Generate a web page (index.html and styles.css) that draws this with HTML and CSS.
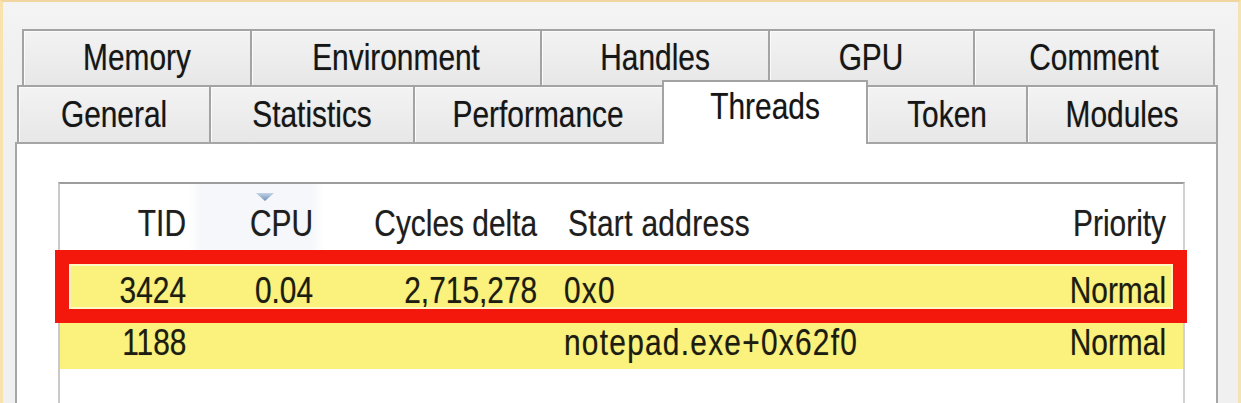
FILE: index.html
```html
<!DOCTYPE html>
<html>
<head>
<meta charset="utf-8">
<title>Threads</title>
<link rel="stylesheet" href="styles.css">
</head>
<body>
<div class="window">
  <div class="tabs">
    <div class="tab-row row-top">
      <div class="tab" style="width:230px"><span class="t">Memory</span></div>
      <div class="tab" style="width:292px"><span class="t">Environment</span></div>
      <div class="tab" style="width:230px"><span class="t">Handles</span></div>
      <div class="tab" style="width:207px"><span class="t">GPU</span></div>
      <div class="tab" style="width:242px"><span class="t">Comment</span></div>
    </div>
    <div class="tab-row row-bottom">
      <div class="tab" style="width:194px"><span class="t">General</span></div>
      <div class="tab" style="width:206px"><span class="t">Statistics</span></div>
      <div class="tab" style="width:251px"><span class="t">Performance</span></div>
      <div class="tab selected" style="width:206px"><span class="t">Threads</span></div>
      <div class="tab" style="width:162px"><span class="t">Token</span></div>
      <div class="tab" style="width:192px"><span class="t">Modules</span></div>
    </div>
  </div>
  <div class="panel">
    <div class="list">
      <div class="lv-row header">
        <div class="cell num c-tid"><span class="t">TID</span></div>
        <div class="cell num c-cpu sorted"><span class="sort-arrow"><svg width="20" height="8" viewBox="0 0 20 8"><defs><linearGradient id="ag" x1="0" y1="0" x2="0" y2="1"><stop offset="0" stop-color="#c3d3e6"/><stop offset="1" stop-color="#6f8fb8"/></linearGradient></defs><polygon points="1,0 19,0 10,8" fill="url(#ag)"/></svg></span><span class="t">CPU</span></div>
        <div class="cell num c-cyc"><span class="t">Cycles delta</span></div>
        <div class="cell c-start"><span class="t">Start address</span></div>
        <div class="cell num c-prio"><span class="t">Priority</span></div>
      </div>
      <div class="lv-row item own">
        <div class="cell num c-tid"><span class="t">3424</span></div>
        <div class="cell num c-cpu"><span class="t">0.04</span></div>
        <div class="cell num c-cyc"><span class="t">2,715,278</span></div>
        <div class="cell c-start"><span class="t">0x0</span></div>
        <div class="cell num c-prio"><span class="t">Normal</span></div>
      </div>
      <div class="lv-row item own">
        <div class="cell num c-tid"><span class="t">1188</span></div>
        <div class="cell num c-cpu"></div>
        <div class="cell num c-cyc"></div>
        <div class="cell c-start"><span class="t">notepad.exe+0x62f0</span></div>
        <div class="cell num c-prio"><span class="t">Normal</span></div>
      </div>
      <div class="highlight-box"></div>
    </div>
  </div>
</div>
</body>
</html>
```

FILE: styles.css
```css
html, body {
  margin: 0;
  padding: 0;
  background: #f0f0f0;
  overflow: hidden;
}

.window {
  box-sizing: border-box;
  width: 1241px;
  height: 403px;
  overflow: hidden;
  border-top: 2px solid #f1d79f;
  border-left: 3px solid #f9e2ab;
  border-right: 3px solid #f6e3b4;
  background: linear-gradient(#f4f4f4, #f0f0f0 60px);
  padding-top: 27px;
  font-family: "Liberation Sans", Arial, sans-serif;
  font-size: 36px;
  line-height: 40px;
  color: #161616;
}

.t {
  display: inline-block;
  transform: scaleX(0.83);
  text-shadow: 0 0 1px rgba(0, 0, 0, 0.35);
}

.tab .t {
  transform-origin: center;
}

.num .t {
  transform-origin: right center;
}

.c-start .t {
  transform-origin: left center;
}

.tabs {
  display: flex;
  flex-direction: column;
}

.tab-row {
  display: flex;
}

.row-top {
  margin-left: 19px;
  height: 56px;
}

.row-bottom {
  margin-left: 14px;
  margin-top: -5px;
  align-items: flex-end;
  height: 62px;
}

.tab {
  box-sizing: border-box;
  height: 57px;
  display: flex;
  align-items: center;
  justify-content: center;
  border: 2px solid #a3a3a3;
  border-bottom: none;
  margin-left: -2px;
  background: linear-gradient(#f3f3f3, #e7e7e7);
  box-shadow: inset 1px 1px 0 #fbfbfb;
  white-space: nowrap;
}

.tab-row .tab:first-child {
  margin-left: 0;
}

.row-top .tab {
  height: 56px;
}

.tab.selected {
  position: relative;
  z-index: 2;
  height: 64px;
  margin-bottom: -2px;
  align-items: flex-start;
  padding-top: 5px;
  background: #ffffff;
  box-shadow: none;
}

.panel {
  position: relative;
  z-index: 1;
  box-sizing: border-box;
  margin-left: 12px;
  width: 1203px;
  height: 300px;
  background: #ffffff;
  border: 2px solid #a6a6a6;
  border-bottom: none;
  padding-top: 38px;
  padding-left: 41px;
}

.list {
  position: relative;
  box-sizing: border-box;
  width: 1127px;
  height: 260px;
  border-top: 2px solid #9c9c9c;
  border-left: 2px solid #c9c9c9;
  border-right: 2px solid #d2d2d2;
  background: #ffffff;
}

.lv-row {
  display: grid;
  grid-template-columns: 128px 137px 223px 1fr 200px;
  white-space: nowrap;
}

.cell {
  box-sizing: border-box;
}

.num {
  text-align: right;
}

.c-tid { padding-right: 2px; }
.c-cpu { padding-right: 12px; }
.c-cyc { padding-right: 11px; }
.c-start { padding-left: 20px; }
.c-prio { padding-right: 17px; }

.header {
  height: 81px;
  color: #1e1e1e;
}

.header .c-start {
  letter-spacing: 0.4px;
}

.header .cell {
  padding-top: 20px;
}

.header .sorted {
  position: relative;
  background: linear-gradient(90deg, #ffffff, #f5f7fa 10%, #f5f7fa 90%, #ffffff);
}

.sort-arrow {
  position: absolute;
  top: 5px;
  left: 67px;
  line-height: 0;
}

.item {
  height: 52px;
  align-items: center;
  color: #1c1c10;
}

.item .c-start {
  padding-left: 16px;
  letter-spacing: 1.5px;
}

.item.own {
  background: #fbf27e;
}

.highlight-box {
  position: absolute;
  box-sizing: border-box;
  left: -5px;
  top: 66px;
  width: 1132px;
  height: 73px;
  border: 14px solid #f4170b;
  box-shadow: inset 0 0 0 2px #fff8c4;
}
```
